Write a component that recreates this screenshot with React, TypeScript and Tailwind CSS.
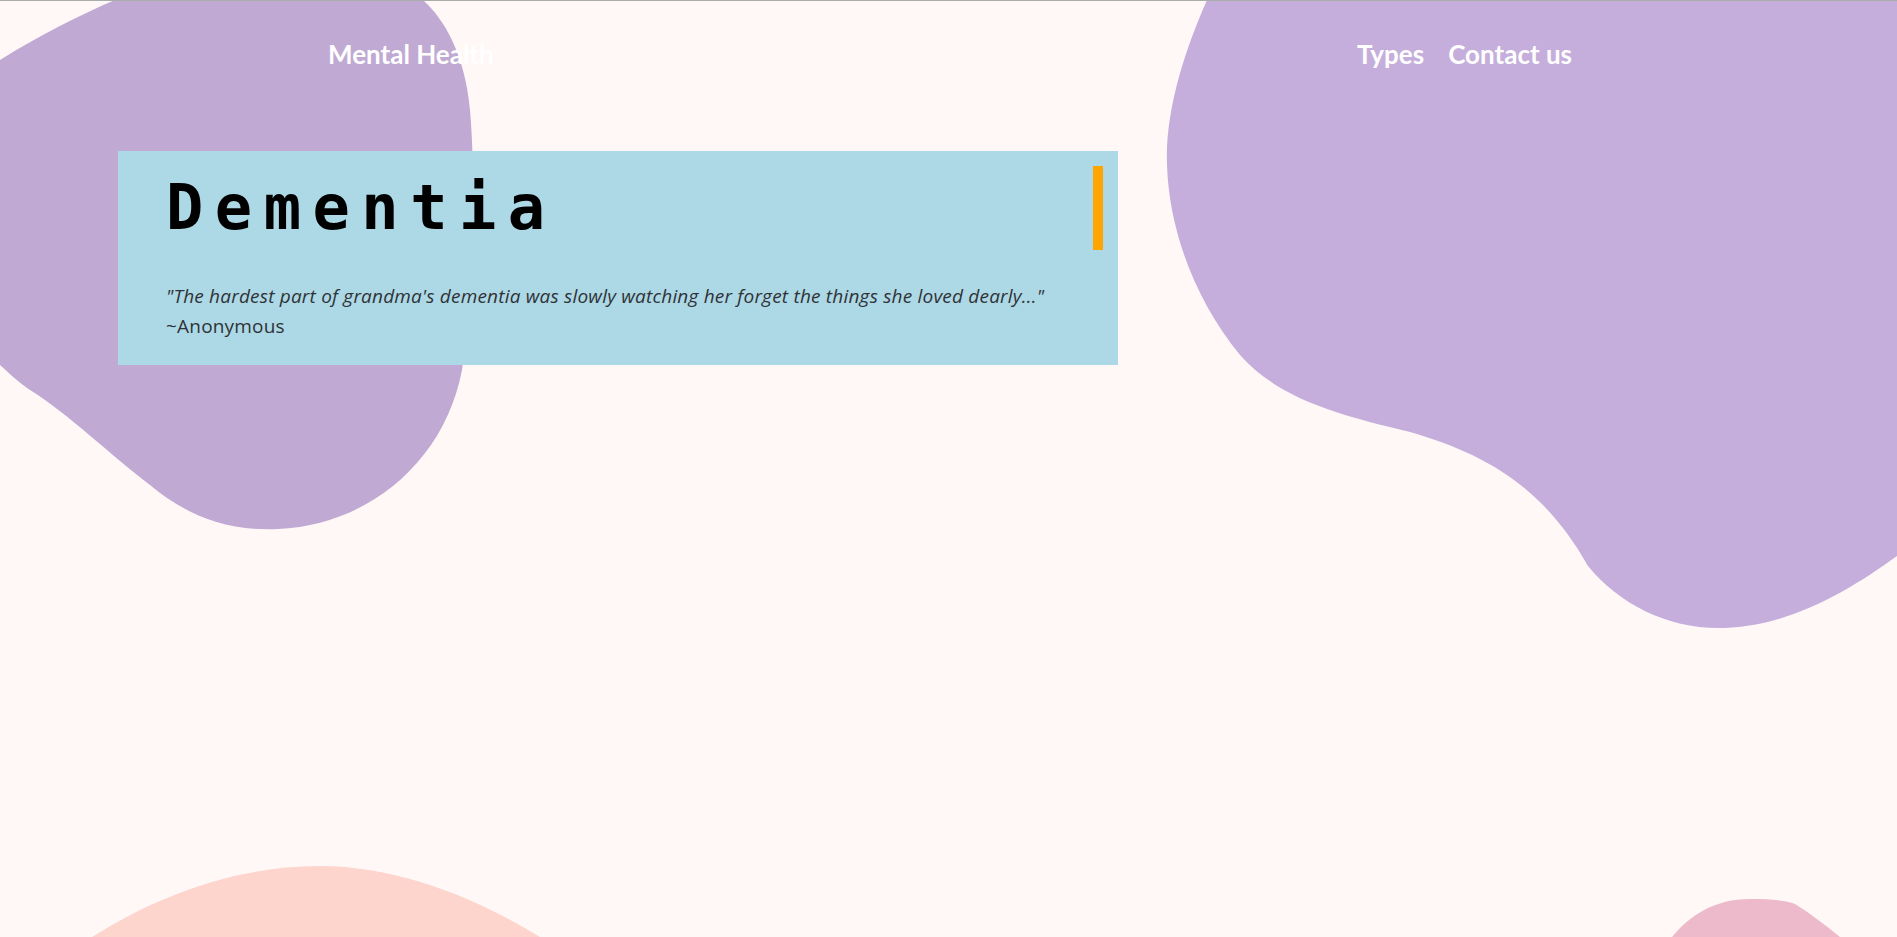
const Blobs = () => (
  <svg
    className="absolute inset-0 h-full w-full"
    viewBox="0 0 1897 937"
    preserveAspectRatio="none"
    aria-hidden="true"
  >
    {/* top left blob */}
    <path
      fill="#c0a9d3"
      d="M115 0 L423 0 C445 20 465 55 470 110 C476 180 474 300 462 370 C445 460 370 525 278 529 C220 532 180 510 150 485 C110 455 70 415 30 390 C18 382 8 372 0 365 L0 60 C40 35 80 15 115 0 Z"
    />
    {/* top right blob */}
    <path
      fill="#c5aedb"
      d="M1207 0 C1185 50 1165 110 1167 165 C1169 230 1195 300 1240 355 C1280 400 1340 415 1410 432 C1490 455 1545 490 1588 566 C1620 605 1670 630 1725 628 C1790 626 1850 590 1897 556 L1897 0 Z"
    />
    {/* bottom blobs */}
    <path fill="#fdd5cd" d="M92 937 C150 900 230 866 320 866 C400 866 480 900 540 937 Z" />
    <path
      fill="#edbacb"
      d="M1672 937 C1690 915 1715 899 1750 899 C1770 899 1785 900 1795 904 C1810 913 1825 925 1840 937 Z"
    />
  </svg>
);

export default function App() {
  return (
    <div className="relative h-[937px] w-full overflow-hidden bg-[#fff8f7] font-['Lato',sans-serif]">
      <Blobs />
      <div className="absolute inset-x-0 top-0 h-px bg-[#a9ada9]" />

      <div className="relative">
        {/* Nav */}
        <nav className="flex h-[108px] items-center justify-between pl-[328px] pr-[325px] text-[26px] font-bold text-white">
          <a href="#">Mental Health</a>
          <ul className="flex gap-[24px]">
            <li>Types</li>
            <li>Contact us</li>
          </ul>
        </nav>

        {/* Hero card */}
        <section className="ml-[118px] mt-[43px] h-[214px] w-[1000px] bg-[#add8e6] pl-12 pr-[15px] pt-[15px]">
          <h1 className="h-[84px] border-r-[10px] border-[#ffa500] font-['DejaVu_Sans_Mono',monospace] text-[62px] font-bold leading-[84px] tracking-[11.5px] text-black">
            Dementia
          </h1>
          <div className="mt-[31px] font-['Open_Sans',sans-serif] text-[19px] leading-[30px] tracking-[0.2px] text-[#2f3336]">
            <p className="italic">
              "The hardest part of grandma's dementia was slowly watching her forget the things she loved dearly..."
            </p>
            <p>~Anonymous</p>
          </div>
        </section>
      </div>
    </div>
  );
}
